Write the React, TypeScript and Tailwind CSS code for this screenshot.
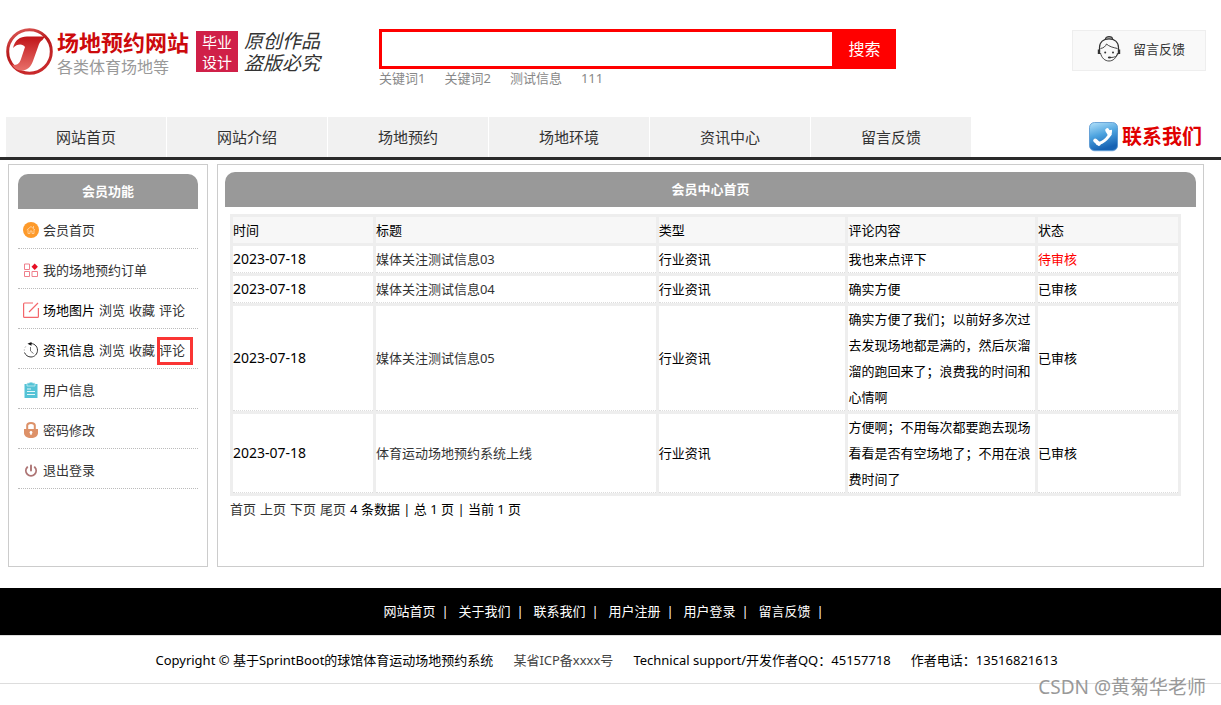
import React from 'react';

const keywords = ['关键词1', '关键词2', '测试信息', '111'];

const navItems = ['网站首页', '网站介绍', '场地预约', '场地环境', '资讯中心', '留言反馈'];

const footerLinks = ['网站首页', '关于我们', '联系我们', '用户注册', '用户登录', '留言反馈'];

const columns = ['时间', '标题', '类型', '评论内容', '状态'];

const comments = [
  { date: '2023-07-18', title: '媒体关注测试信息03', type: '行业资讯', content: '我也来点评下', status: '待审核' },
  { date: '2023-07-18', title: '媒体关注测试信息04', type: '行业资讯', content: '确实方便', status: '已审核' },
  {
    date: '2023-07-18',
    title: '媒体关注测试信息05',
    type: '行业资讯',
    content: '确实方便了我们；以前好多次过去发现场地都是满的，然后灰溜溜的跑回来了；浪费我的时间和心情啊',
    status: '已审核',
  },
  {
    date: '2023-07-18',
    title: '体育运动场地预约系统上线',
    type: '行业资讯',
    content: '方便啊；不用每次都要跑去现场看看是否有空场地了；不用在浪费时间了',
    status: '已审核',
  },
];

export default function App() {
  return (
    <div className="min-h-screen bg-white text-[13px] leading-[26px] text-black font-['Noto_Sans','Noto_Sans_CJK_SC',sans-serif]">
      <Header />
      <Navbar />
      <main className="flex gap-[9px] pt-1 pl-2 pr-[17px] min-h-[407px]">
        <Sidebar />
        <section className="flex-1 border border-[#ccc] p-[7px]">
          <h1 className="h-[35px] leading-[35px] rounded-t-[10px] bg-[#999] text-white font-bold text-center">
            会员中心首页
          </h1>
          <div className="pt-[7px] pl-[5px] pr-[15px]">
            <CommentTable />
            <Pager />
          </div>
        </section>
      </main>
      <Footer />
    </div>
  );
}

function Header() {
  return (
    <header className="flex items-start h-[117px] pt-7 pl-1.5 pr-[15px]">
      {/* Logo */}
      <a href="#home" className="flex items-start w-[373px] shrink-0">
        <LogoMark />
        <span className="flex flex-col ml-1 w-[139px]">
          <span className="text-[22px] leading-7 font-bold text-[#cc0a0c]">场地预约网站</span>
          <span className="text-[16px] leading-[22px] text-[#999]">各类体育场地等</span>
        </span>
        <span className="flex flex-col justify-center mt-[3px] w-[42px] h-[41px] bg-[#d02048] text-white text-[15px] leading-5 text-center">
          <span>毕业</span>
          <span>设计</span>
        </span>
        <span className="flex flex-col ml-1.5 mt-0.5 text-[19px] leading-[22px] italic text-[#333]">
          <span>原创作品</span>
          <span>盗版必究</span>
        </span>
      </a>

      {/* Search */}
      <div className="mt-px">
        <form className="flex h-10 border-[3px] border-[#f00] bg-[#f00]" onSubmit={(e) => e.preventDefault()}>
          <input type="text" aria-label="搜索" className="w-[450px] bg-white px-2 outline-none" />
          <button type="submit" className="w-[61px] pl-1 text-white text-[16px]">
            搜索
          </button>
        </form>
        <div className="flex gap-[19px] leading-[18px] text-[#888]">
          {keywords.map((word) => (
            <a key={word} href="#search">
              {word}
            </a>
          ))}
        </div>
      </div>

      <a
        href="#feedback"
        className="flex items-center ml-auto mt-0.5 w-[134px] h-[41px] pb-1 pl-6 gap-3 border border-[#eee] bg-[#f9f9f9] text-[#333]"
      >
        <ServiceIcon />
        留言反馈
      </a>
    </header>
  );
}

function Navbar() {
  return (
    <nav className="flex items-center h-[43px] pl-1.5 pr-[19px] border-b-[3px] border-[#2a2a2a]">
      <div className="flex gap-px">
        {navItems.map((item) => (
          <a key={item} href="#nav" className="w-40 h-10 leading-10 text-center text-[15px] text-[#333] bg-[#f1f1f1]">
            {item}
          </a>
        ))}
      </div>
      <a href="#contact" className="flex items-center gap-1 ml-auto text-[20px] font-bold text-[#e00000]">
        <PhoneIcon />
        联系我们
      </a>
    </nav>
  );
}

function Sidebar() {
  return (
    <aside className="w-[200px] shrink-0 border border-[#ccc] p-[9px]">
      <h2 className="h-[35px] leading-[35px] rounded-t-[10px] bg-[#999] text-white font-bold text-center">会员功能</h2>
      <ul>
        <MenuRow icon={<HomeIcon />}>
          <MenuLink>会员首页</MenuLink>
        </MenuRow>
        <MenuRow icon={<GridIcon />}>
          <MenuLink>我的场地预约订单</MenuLink>
        </MenuRow>
        <MenuRow icon={<EditIcon />}>
          <span>场地图片</span>
          <MenuLink>浏览</MenuLink>
          <MenuLink>收藏</MenuLink>
          <MenuLink>评论</MenuLink>
        </MenuRow>
        <MenuRow icon={<HistoryIcon />}>
          <span>资讯信息</span>
          <MenuLink>浏览</MenuLink>
          <MenuLink>收藏</MenuLink>
          <span className="relative">
            <MenuLink>评论</MenuLink>
            <span className="absolute -left-0.5 top-0 w-9 h-7 border-[3px] border-[#fa3534] pointer-events-none" />
          </span>
        </MenuRow>
        <MenuRow icon={<ClipboardIcon />}>
          <MenuLink>用户信息</MenuLink>
        </MenuRow>
        <MenuRow icon={<LockIcon />}>
          <MenuLink>密码修改</MenuLink>
        </MenuRow>
        <MenuRow icon={<PowerIcon />}>
          <MenuLink>退出登录</MenuLink>
        </MenuRow>
      </ul>
    </aside>
  );
}

function MenuRow({ icon, children }: { icon: React.ReactNode; children: React.ReactNode }) {
  return (
    <li className="flex items-center gap-1 h-10 pt-0.5 pl-[5px] border-b border-dotted border-[#bbb]">
      {icon}
      {children}
    </li>
  );
}

function MenuLink({ children }: { children: React.ReactNode }) {
  return (
    <a href="#member" className="text-[#333] hover:text-[#f00]">
      {children}
    </a>
  );
}

function CommentTable() {
  return (
    <table className="w-full table-fixed border-separate border-spacing-[3px] bg-[#eee]">
      <colgroup>
        <col className="w-[15%]" />
        <col className="w-[30%]" />
        <col className="w-[20%]" />
        <col className="w-[20%]" />
        <col className="w-[15%]" />
      </colgroup>
      <thead>
        <tr>
          {columns.map((name) => (
            <th key={name} className="p-0 bg-[#f7f7f7] font-normal text-left">
              {name}
            </th>
          ))}
        </tr>
      </thead>
      <tbody>
        {comments.map((row) => (
          <tr key={row.title}>
            <Cell>
              <span className="text-[14px]">{row.date}</span>
            </Cell>
            <Cell>
              <a href="#detail" className="text-[#333]">
                {row.title}
              </a>
            </Cell>
            <Cell>{row.type}</Cell>
            <Cell>{row.content}</Cell>
            <Cell>{row.status === '待审核' ? <span className="text-[#f00]">{row.status}</span> : row.status}</Cell>
          </tr>
        ))}
      </tbody>
    </table>
  );
}

function Cell({ children }: { children: React.ReactNode }) {
  return <td className="p-0 align-middle bg-white border-b border-dotted border-[#ddd]">{children}</td>;
}

function Pager() {
  return (
    <div className="flex gap-1">
      {['首页', '上页', '下页', '尾页'].map((label) => (
        <a key={label} href="#page" className="text-[#333]">
          {label}
        </a>
      ))}
      <span>4 条数据 | 总 1 页 | 当前 1 页</span>
    </div>
  );
}

function Footer() {
  return (
    <footer className="relative mt-[21px]">
      <div className="flex justify-center h-[47px] leading-[47px] pr-1 bg-black text-white">
        {footerLinks.map((label) => (
          <span key={label} className="flex gap-1.5 w-[75px]">
            <a href="#footer">{label}</a>
            <span>|</span>
          </span>
        ))}
      </div>
      <div className="flex justify-center gap-5 h-[49px] leading-[49px] pr-2 border-y border-[#ddd]">
        <span>Copyright © 基于SprintBoot的球馆体育运动场地预约系统</span>
        <a href="#icp" className="text-[#444]">
          某省ICP备xxxx号
        </a>
        <span>Technical support/开发作者QQ：45157718</span>
        <span>作者电话：13516821613</span>
      </div>
      <span className="absolute right-[15px] -bottom-4 text-[19px] text-[#999]">
        CSDN @黄菊华老师
      </span>
    </footer>
  );
}

/* ---------- icons ---------- */

function LogoMark() {
  return (
    <svg className="w-[47px] h-[47px] shrink-0" viewBox="0 0 47 47">
      <defs>
        <linearGradient id="ring" x1="0" y1="0" x2="0.4" y2="1">
          <stop offset="0" stopColor="#e0605c" />
          <stop offset="0.5" stopColor="#b81a1c" />
          <stop offset="1" stopColor="#c8292b" />
        </linearGradient>
        <linearGradient id="stem" x1="0" y1="0" x2="0" y2="1">
          <stop offset="0" stopColor="#c01418" />
          <stop offset="1" stopColor="#e8706a" />
        </linearGradient>
      </defs>
      <circle cx="23.5" cy="23.5" r="21.8" fill="#fff" stroke="url(#ring)" strokeWidth="3" />
      <path
        d="M7 20C9 12 14 8.500 21 8.500H39L36.500 12C34 13.500 33 15.500 32 19L27 33C24.500 40 20 43 14 42.500C10 42 7.500 39.500 6 36.500C11 38 13.500 35.500 15 31L19 19C17 15.500 11 15.500 7 20Z"
        fill="url(#stem)"
      />
    </svg>
  );
}

function ServiceIcon() {
  return (
    <svg className="w-6 h-7 shrink-0" viewBox="0 0 24 28" fill="none" stroke="#333" strokeWidth="1.2">
      <path d="M8.500 4.200C8.500 .8 15.500 .8 15.500 4.200" fill="#ccc" />
      <path d="M2.500 15V12.500C2.500 7 6.500 3.800 12 3.800S21.500 7 21.500 12.500V15" />
      <path d="M3.500 18C4.500 23 8 26 12 26S19.500 23 20.500 18" strokeWidth="0.9" />
      <path d="M3.500 13.500C6.500 13 8.500 11.500 9.500 9C12 11.500 16 12.500 20.500 13.500" strokeWidth="0.9" />
      <path d="M2 14.500V19M22 14.500V19" strokeWidth="2.400" />
      <path d="M21 19C20 21.500 17.500 22.500 13.500 22.500" strokeWidth="0.9" />
      <circle cx="8.200" cy="17.500" r="1" fill="#333" stroke="none" />
      <circle cx="16" cy="17.500" r="1" fill="#333" stroke="none" />
      <ellipse cx="12.500" cy="22.500" rx="1.700" ry="1" fill="#333" stroke="none" />
    </svg>
  );
}

function PhoneIcon() {
  return (
    <svg className="w-[29px] h-[30px] shrink-0" viewBox="0 0 29 30">
      <defs>
        <linearGradient id="phone" x1="0" y1="0" x2="0.3" y2="1">
          <stop offset="0" stopColor="#b4e2fa" />
          <stop offset="0.5" stopColor="#4da3df" />
          <stop offset="1" stopColor="#1763b4" />
        </linearGradient>
      </defs>
      <rect x="0.500" y="1.500" width="28" height="28" rx="5" fill="#bcd3ee" />
      <rect x="0.500" y="0.500" width="28" height="28" rx="5" fill="url(#phone)" stroke="#5596d0" strokeWidth="0.8" />
      <path d="M21.500 8C22.500 13.500 14 22 7.500 21.500" fill="none" stroke="#fff" strokeWidth="3" />
      <path d="M18.200 8.200L20.600 12.200M6.200 18.600L9.800 21.800" fill="none" stroke="#fff" strokeWidth="4" strokeLinecap="round" />
    </svg>
  );
}

function HomeIcon() {
  return (
    <svg className="w-4 h-4 shrink-0" viewBox="0 0 16 16">
      <circle cx="8" cy="8" r="8" fill="#fd9a2b" />
      <path d="M3.800 8L8 4.500L12 8M5 7.500V11.500H7V9H9V11.500H11V7.500M10.500 4V6" fill="none" stroke="#ffd3a0" strokeWidth="0.9" />
    </svg>
  );
}

function GridIcon() {
  return (
    <svg className="w-4 h-4 shrink-0" viewBox="0 0 16 16" fill="none" stroke="#ef7f8b" strokeWidth="1">
      <path d="M1.500 2H6.500V7.500H1.500ZM1.500 9.500H6.500V14.500H1.500ZM9 9.500H14.500V14.500H9Z" />
      <path d="M11.700 1.500L14.900 4.700L11.700 7.900L8.500 4.700Z" fill="#e60f24" stroke="none" />
    </svg>
  );
}

function EditIcon() {
  return (
    <svg className="w-4 h-4 shrink-0" viewBox="0 0 16 16" fill="none" stroke="#f3666b" strokeWidth="1.200">
      <path d="M10 1H1.500Q.6 1 .6 2V14.500Q.6 15.400 1.500 15.400H14.500Q15.400 15.400 15.400 14.500V6M6 10L15 1" />
    </svg>
  );
}

function HistoryIcon() {
  return (
    <svg className="w-4 h-4 shrink-0" viewBox="0 0 16 16" fill="none" stroke="#333" strokeWidth="1">
      <path d="M6.500 1.700C10.500 .8 14.500 3.800 14.500 8.200C14.500 12 11.500 15 8 15C5 15 2.500 13.200 1.500 10.500" />
      <path d="M7.500 5V9L10.500 11.500" stroke="#777" />
      <path d="M8.500 0V3.800L4.500 1.800Z" fill="#111" stroke="none" />
      <path d="M1.300 8.500V7.500M2 5.500L2.700 4.500" stroke="#999" />
    </svg>
  );
}

function ClipboardIcon() {
  return (
    <svg className="w-4 h-4 shrink-0" viewBox="0 0 16 16">
      <path d="M1.500 2H14.500V16H1.500Z" fill="#55c3d6" />
      <path d="M4 1H6Q8 -1 10 1H12V4H4Z" fill="#55c3d6" stroke="#d5f1f5" strokeWidth="0.7" />
      <path d="M4 7H8M4 9.500H12M4 12.500H12" stroke="#e6f8fa" strokeWidth="1.200" />
    </svg>
  );
}

function LockIcon() {
  return (
    <svg className="w-4 h-4 shrink-0" viewBox="0 0 16 16">
      <path d="M4.200 8V3.500Q4.200 1 8 1T11.800 3.500V8" fill="none" stroke="#dd9168" strokeWidth="2" />
      <path d="M1 7H15V11C15 14 12 16 8 16S1 14 1 11Z" fill="#dd9168" />
      <circle cx="8" cy="10.500" r="1.400" fill="#fff" />
      <path d="M8 10.500V13" stroke="#fff" strokeWidth="1.200" />
    </svg>
  );
}

function PowerIcon() {
  return (
    <svg className="w-4 h-4 shrink-0" viewBox="0 0 16 16" fill="none" stroke="#ad7474" strokeWidth="1.900" strokeLinecap="round">
      <path d="M4.300 5.200A5.100 5.100 0 1 0 11.700 5.200M8 3.500V8.500" />
    </svg>
  );
}
